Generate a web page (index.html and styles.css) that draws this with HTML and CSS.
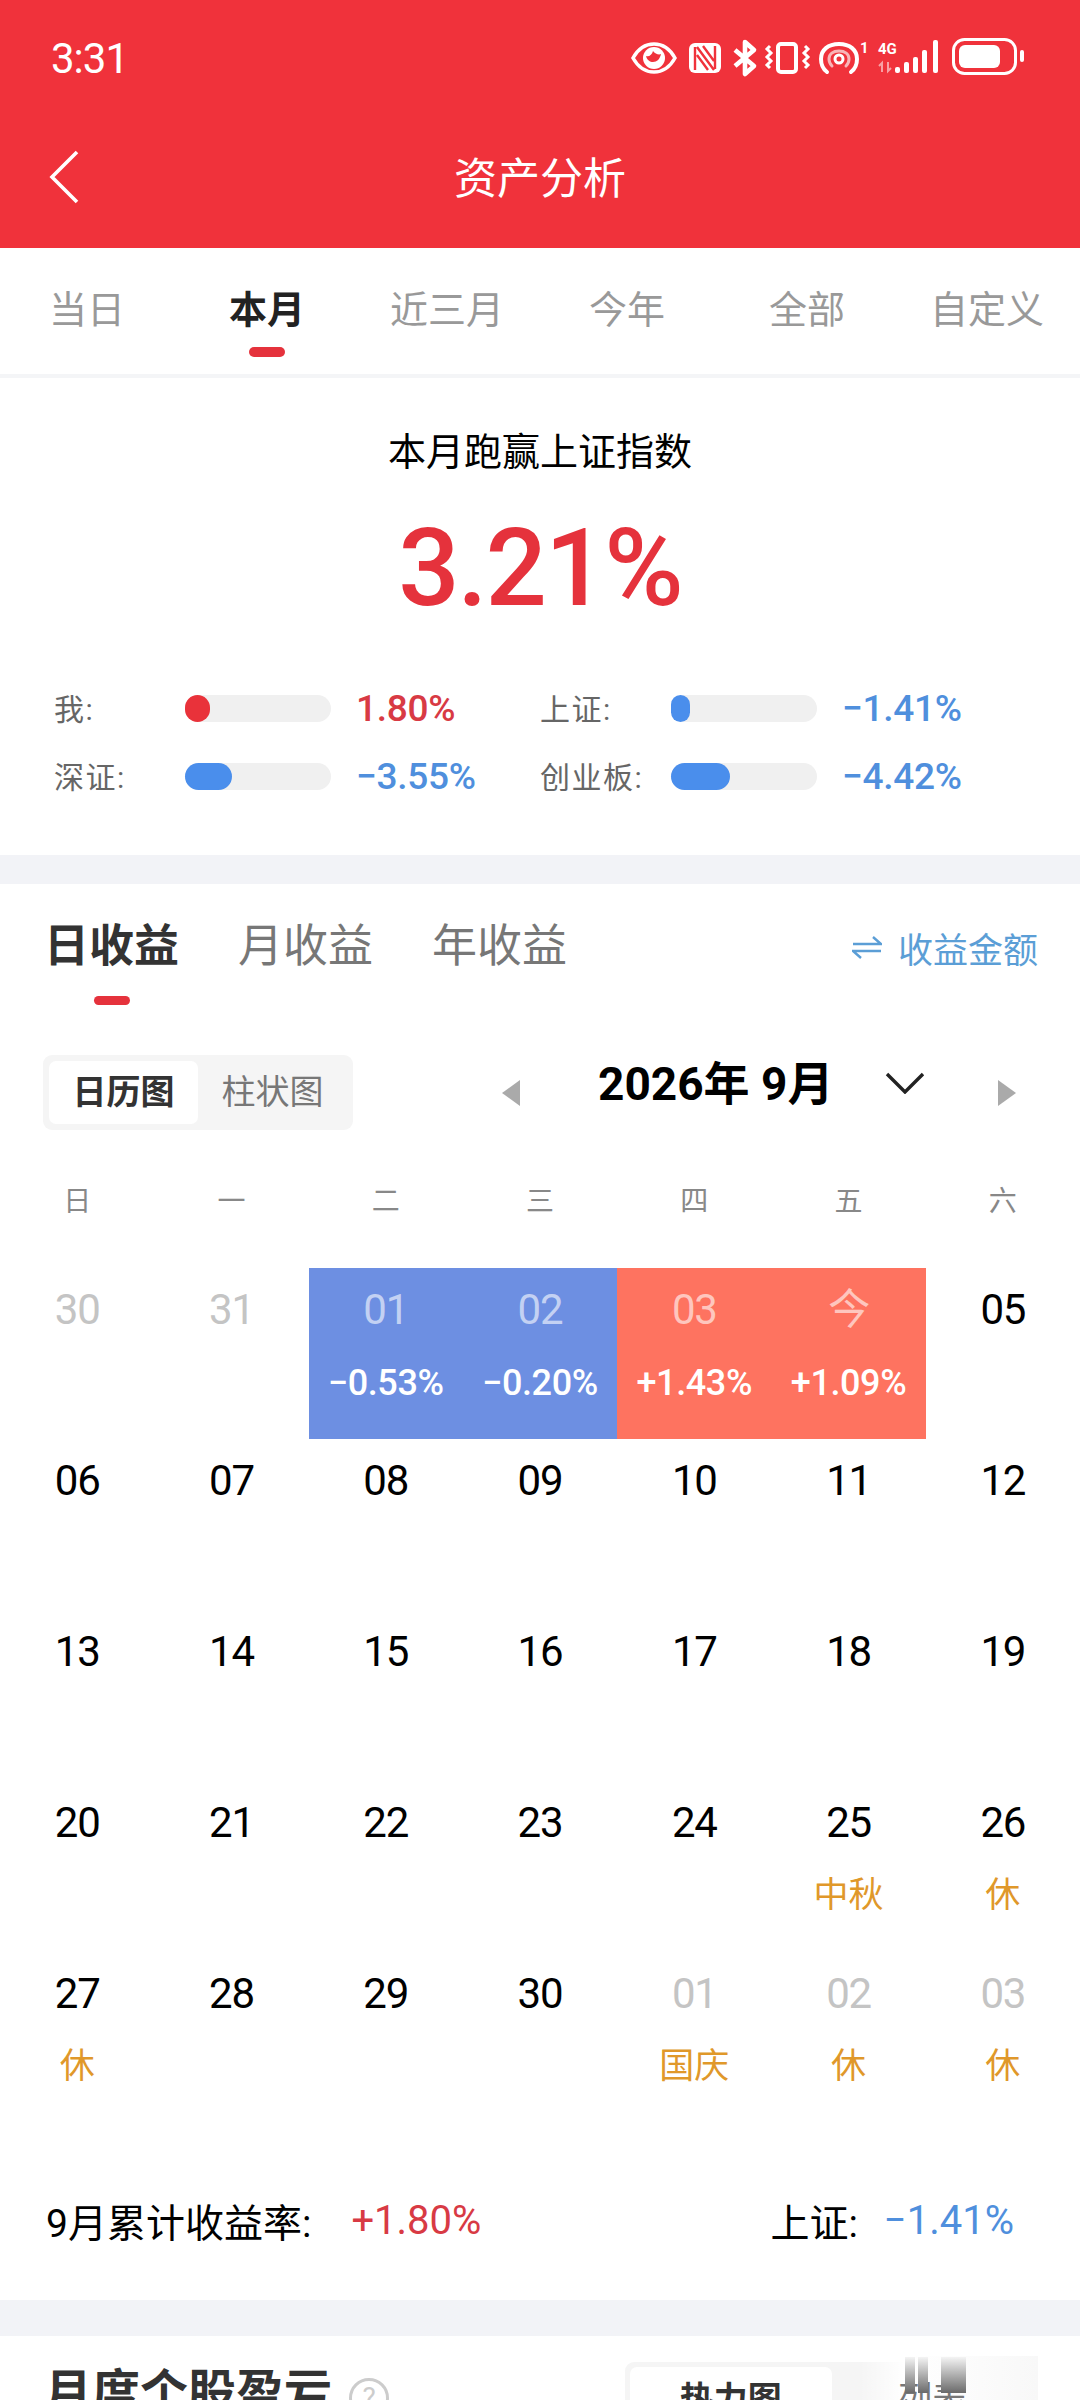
FILE: index.html
```html
<!DOCTYPE html>
<html lang="zh-CN">

<head>
    <meta charset="UTF-8">
    <meta name="viewport" content="width=device-width, initial-scale=1.0">
    <title>资产分析</title>
    <link rel="stylesheet" href="styles.css">
</head>

<body>

    <header class="topbar">
        <div class="status">
            <span class="time">3:31</span>
            <!-- viewBox starts at x=620 so numbers read as screen pixels -->
            <svg class="status-icons" viewBox="620 30 410 50" fill="none" stroke="#fff">
                <!-- eye -->
                <path d="M633 58c5-9 12-14 21-14s16 5 21 14c-5 9-12 14-21 14s-16-5-21-14z" stroke-width="3.5" />
                <circle cx="654" cy="58" r="11" fill="#fff" stroke="none" />
                <path d="M646 56c3 1 6-1 7-5 2 3 6 4 8 3-1 5-4 8-8 8-3 0-6-2-7-6z" fill="#f0323b" stroke="none" />
                <!-- nfc -->
                <rect x="689" y="43" width="32" height="30" rx="6" fill="#fff" stroke="none" />
                <path d="M695 70V47M715 46v23M697 47l17 23M703 46l11 15M697 55l11 15" stroke="#f0323b" stroke-width="2.4" />
                <!-- bluetooth -->
                <path d="M735 50l19 16-9 8V42l9 8-19 16" stroke-width="4.6" stroke-linejoin="round" />
                <!-- vibrate -->
                <rect x="778" y="44" width="18" height="28" rx="3" stroke-width="4" />
                <path d="M770 46l-3 3 4 4-4 4 4 4-4 4 3 3M805 46l3 3-4 4 4 4-4 4 4 4-3 3" stroke-width="3" />
                <!-- hotspot -->
                <path d="M827 72c-4-3-6-8-6-13 0-9 7-15 18-15s18 6 18 15c0 5-2 10-6 13" stroke-width="4" stroke-linecap="round" />
                <path d="M832 66c-2-2-3-4-3-7 0-5 4-8 10-8s10 3 10 8c0 3-1 5-3 7" stroke="#f8b5b8" stroke-width="3" stroke-linecap="round" />
                <circle cx="839" cy="59" r="4" stroke-width="3" />
                <text class="status-text" x="860" y="53">1</text>
                <text class="status-text" x="878" y="54">4G</text>
                <!-- data arrows -->
                <path d="M882 72v-9l-3 3M888 62v9l3-3" stroke="#f8a0a5" stroke-width="2" />
                <!-- signal -->
                <g fill="#fff" stroke="none">
                    <rect x="895" y="67" width="5" height="6" rx="2" />
                    <rect x="904" y="62" width="5" height="11" rx="2" />
                    <rect x="913" y="57" width="5" height="16" rx="2" />
                    <rect x="922" y="50" width="5" height="23" rx="2" />
                    <rect x="933" y="40" width="5" height="33" rx="2" />
                </g>
                <!-- battery -->
                <rect x="953.5" y="39.5" width="62" height="34" rx="11" stroke-width="3" />
                <rect x="959" y="45" width="41" height="23" rx="6" fill="#fff" stroke="none" />
                <rect x="1020" y="50" width="4" height="12" rx="2" fill="#fff" stroke="none" />
            </svg>
        </div>
        <div class="nav">
            <svg class="back" viewBox="0 0 30 54" fill="none" stroke="#fff" stroke-width="3.6">
                <path d="M28 2L3 27l25 25" />
            </svg>
            <h1 class="nav-title">资产分析</h1>
        </div>
    </header>

    <nav class="range-tabs">
        <div class="range-tab">当日</div>
        <div class="range-tab active">本月</div>
        <div class="range-tab">近三月</div>
        <div class="range-tab">今年</div>
        <div class="range-tab">全部</div>
        <div class="range-tab">自定义</div>
    </nav>

    <section class="beat">
        <div class="beat-title">本月跑赢上证指数</div>
        <div class="beat-value">3.21%</div>
        <div class="stats">
            <div class="stat">
                <span class="stat-label">我:</span>
                <span class="bar"><span class="fill up" style="width: 25px"></span></span>
                <span class="stat-value red">1.80%</span>
            </div>
            <div class="stat">
                <span class="stat-label">上证:</span>
                <span class="bar"><span class="fill" style="width: 19px"></span></span>
                <span class="stat-value blue">−1.41%</span>
            </div>
            <div class="stat">
                <span class="stat-label">深证:</span>
                <span class="bar"><span class="fill" style="width: 47px"></span></span>
                <span class="stat-value blue">−3.55%</span>
            </div>
            <div class="stat">
                <span class="stat-label">创业板:</span>
                <span class="bar"><span class="fill" style="width: 59px"></span></span>
                <span class="stat-value blue">−4.42%</span>
            </div>
        </div>
    </section>

    <section class="profit">
        <div class="profit-head">
            <div class="profit-tab active">日收益</div>
            <div class="profit-tab">月收益</div>
            <div class="profit-tab">年收益</div>
            <div class="profit-switch">
                <svg class="swap" viewBox="0 0 30 24" fill="none" stroke="#5b9ed6" stroke-width="2.4">
                    <path d="M1 9h28L21 2M29 16H1l8 7" />
                </svg>
                收益金额
            </div>
        </div>

        <div class="controls">
            <div class="segment">
                <div class="segment-item on">日历图</div>
                <div class="segment-item">柱状图</div>
            </div>
            <span class="arrow left"></span>
            <span class="month">2026年 9月</span>
            <svg class="month-down" viewBox="0 0 40 22" fill="none" stroke="#222" stroke-width="3.4">
                <path d="M2 2l18 18L38 2" />
            </svg>
            <span class="arrow right"></span>
        </div>

        <div class="weekdays">
            <span>日</span><span>一</span><span>二</span><span>三</span><span>四</span><span>五</span><span>六</span>
        </div>

        <div class="calendar">
            <div class="day dim"><b>30</b></div>
            <div class="day dim"><b>31</b></div>
            <div class="day loss"><b>01</b><i>−0.53%</i></div>
            <div class="day loss"><b>02</b><i>−0.20%</i></div>
            <div class="day gain"><b>03</b><i>+1.43%</i></div>
            <div class="day gain"><b>今</b><i>+1.09%</i></div>
            <div class="day"><b>05</b></div>

            <div class="day"><b>06</b></div>
            <div class="day"><b>07</b></div>
            <div class="day"><b>08</b></div>
            <div class="day"><b>09</b></div>
            <div class="day"><b>10</b></div>
            <div class="day"><b>11</b></div>
            <div class="day"><b>12</b></div>

            <div class="day"><b>13</b></div>
            <div class="day"><b>14</b></div>
            <div class="day"><b>15</b></div>
            <div class="day"><b>16</b></div>
            <div class="day"><b>17</b></div>
            <div class="day"><b>18</b></div>
            <div class="day"><b>19</b></div>

            <div class="day"><b>20</b></div>
            <div class="day"><b>21</b></div>
            <div class="day"><b>22</b></div>
            <div class="day"><b>23</b></div>
            <div class="day"><b>24</b></div>
            <div class="day"><b>25</b><i class="holiday">中秋</i></div>
            <div class="day"><b>26</b><i class="holiday">休</i></div>

            <div class="day"><b>27</b><i class="holiday">休</i></div>
            <div class="day"><b>28</b></div>
            <div class="day"><b>29</b></div>
            <div class="day"><b>30</b></div>
            <div class="day dim"><b>01</b><i class="holiday">国庆</i></div>
            <div class="day dim"><b>02</b><i class="holiday">休</i></div>
            <div class="day dim"><b>03</b><i class="holiday">休</i></div>
        </div>

        <div class="total">
            <span class="total-label">9月累计收益率:</span>
            <span class="total-value first red">+1.80%</span>
            <span class="total-label index">上证:</span>
            <span class="total-value blue">−1.41%</span>
        </div>
    </section>

    <section class="stocks">
        <div class="stocks-title">月度个股盈亏</div>
        <span class="help">?</span>
        <div class="segment stocks-segment">
            <div class="segment-item on">热力图</div>
            <div class="segment-item">列表</div>
            <!-- the list tab is caught mid-transition in this shot -->
            <div class="fade"></div>
            <div class="ghost"><span></span><span></span><span></span></div>
        </div>
    </section>

</body>

</html>
```

FILE: styles.css
```css
html,
body {
    height: 2400px;
    overflow: hidden;
}

body {
    margin: 0;
    background-color: #fff;
    color: #000;
    font-family: Roboto, "Noto Sans CJK SC", sans-serif;
}

.red {
    color: #d83a44;
}

.blue {
    color: #4f8fdd;
}

/* Top red bar */
.topbar {
    height: 248px;
    background-color: #f0323b;
    color: #fff;
}

.status {
    display: flex;
    justify-content: space-between;
    align-items: center;
    height: 116px;
    padding-left: 51px;
}

.time {
    font-size: 42px;
    letter-spacing: -1px;
}

.status-icons {
    width: 410px;
    height: 50px;
    margin-right: 50px;
    margin-bottom: 6px;
}

.status-text {
    fill: #fff;
    stroke: none;
    font-size: 15px;
    font-weight: 700;
}

.nav {
    display: flex;
    align-items: center;
    justify-content: center;
    position: relative;
    height: 122px;
}

.back {
    position: absolute;
    left: 49px;
    top: 34px;
    width: 30px;
    height: 54px;
}

.nav-title {
    margin: 0 0 5px;
    font-size: 43px;
    font-weight: 400;
}

/* Range tabs */
.range-tabs {
    display: flex;
    height: 126px;
    margin-left: -3px;
    border-bottom: 4px solid #f4f5f7;
}

.range-tab {
    width: 180px;
    padding-top: 37px;
    color: #999;
    font-size: 38px;
    line-height: 50px;
    text-align: center;
}

.range-tab.active {
    color: #222;
    font-weight: 700;
}

.range-tab.active::after {
    content: "";
    display: block;
    width: 36px;
    height: 10px;
    margin: 12px auto 0;
    border-radius: 5px;
    background-color: #e5323c;
}

/* Beat the index */
.beat {
    box-sizing: border-box;
    height: 506px;
    padding-top: 50px;
    border-bottom: 29px solid #f2f3f7;
}

.beat-title {
    font-size: 38px;
    line-height: 48px;
    text-align: center;
}

.beat-value {
    margin-top: 32px;
    color: #e5323c;
    font-size: 108px;
    font-weight: 500;
    letter-spacing: -2px;
    line-height: 120px;
    text-align: center;
}

.stats {
    display: grid;
    grid-template-columns: 486px 486px;
    row-gap: 28px;
    margin-top: 60px;
    padding-left: 54px;
}

.stat {
    display: flex;
    align-items: center;
    height: 40px;
}

.stat-label {
    width: 131px;
    margin-bottom: 3px;
    color: #666;
    font-size: 30px;
    letter-spacing: 1.5px;
}

.bar {
    display: block;
    width: 146px;
    height: 27px;
    border-radius: 14px;
    background-color: #f0f0f0;
}

.fill {
    display: block;
    height: 27px;
    border-radius: 14px;
    background-color: #4a8eec;
}

.fill.up {
    background-color: #e9323a;
}

.stat-value {
    margin-left: 25px;
    font-size: 37px;
    font-weight: 500;
    letter-spacing: -0.3px;
}

/* Daily profit */
.profit-head {
    display: flex;
    padding: 33px 42px 0 44px;
}

.profit-tab {
    margin-right: 59px;
    color: #777;
    font-size: 45px;
    line-height: 60px;
}

.profit-tab.active {
    color: #333;
    font-weight: 700;
}

.profit-tab.active::after {
    content: "";
    display: block;
    width: 36px;
    height: 9px;
    margin: 19px auto 0;
    border-radius: 5px;
    background-color: #e5323c;
}

.profit-switch {
    display: flex;
    align-items: center;
    gap: 16px;
    height: 60px;
    margin-left: auto;
    color: #5b9ed6;
    font-size: 35px;
}

.swap {
    width: 30px;
    height: 24px;
}

.controls {
    display: flex;
    align-items: center;
    margin-top: 50px;
    padding-left: 43px;
}

.segment {
    display: flex;
    box-sizing: border-box;
    width: 310px;
    height: 75px;
    padding: 6px;
    border-radius: 9px;
    background-color: #f5f5f5;
}

.segment-item {
    width: 149px;
    color: #777;
    font-size: 34px;
    line-height: 63px;
    text-align: center;
}

.segment-item.on {
    border-radius: 7px;
    background-color: #fff;
    color: #333;
    font-weight: 700;
}

.arrow {
    width: 0;
    height: 0;
    border-top: 13px solid transparent;
    border-bottom: 13px solid transparent;
}

.arrow.left {
    margin-left: 149px;
    border-right: 18px solid #aaa;
}

.arrow.right {
    margin-left: 73px;
    border-left: 18px solid #aaa;
}

.month {
    width: 228px;
    margin-left: 78px;
    margin-bottom: 18px;
    font-size: 46px;
    font-weight: 700;
    line-height: 50px;
    white-space: nowrap;
}

.month-down {
    width: 40px;
    height: 22px;
    margin-left: 59px;
    margin-bottom: 20px;
}

.weekdays {
    display: grid;
    grid-template-columns: repeat(7, 1fr);
    margin-top: 51px;
    color: #888;
    font-size: 28px;
    line-height: 42px;
    text-align: center;
}

/* Calendar */
.calendar {
    display: grid;
    grid-template-columns: repeat(7, 1fr);
    grid-auto-rows: 171px;
    margin-top: 45px;
}

.day {
    text-align: center;
}

.day b {
    display: block;
    margin-top: 17px;
    font-size: 42px;
    font-weight: 400;
    letter-spacing: -1.2px;
    line-height: 50px;
}

.day i {
    display: block;
    margin-top: 23px;
    font-size: 36px;
    font-style: normal;
    font-weight: 500;
    letter-spacing: -0.4px;
    line-height: 50px;
}

.day.dim b {
    color: #c4c4c4;
}

.day.loss,
.day.gain {
    color: #fff;
}

.day.loss {
    background-color: #6d8fe2;
}

.day.gain {
    background-color: #fe7360;
}

.day.loss b,
.day.gain b {
    color: rgba(255, 255, 255, 0.6);
}

.day i.holiday {
    color: #e0982a;
    font-size: 35px;
    font-weight: 400;
    letter-spacing: 0;
}

.total {
    display: flex;
    align-items: center;
    height: 50px;
    padding: 72px 66px 55px 46px;
    border-bottom: 36px solid #f2f3f7;
}

.total-label {
    font-size: 39px;
}

.total-label.index {
    margin-left: auto;
}

.total-value {
    margin-left: 26px;
    font-size: 40px;
}

.total-value.first {
    margin-left: 40px;
}

/* Monthly stocks, cut off by the screen edge */
.stocks {
    display: flex;
    align-items: flex-start;
    padding: 26px 42px 0 44px;
}

.stocks-title {
    margin-top: 1px;
    color: #333;
    font-size: 48px;
    font-weight: 700;
    line-height: 60px;
}

.help {
    width: 34px;
    height: 34px;
    margin: 16px 0 0 17px;
    border: 3px solid #ccc;
    border-radius: 50%;
    color: #ccc;
    font-size: 28px;
    line-height: 34px;
    text-align: center;
}

.stocks-segment {
    position: relative;
    width: 413px;
    margin-left: auto;
    padding: 5px;
}

.stocks-segment .segment-item {
    position: relative;
    z-index: 1;
    width: 202px;
    line-height: 64px;
}

.fade {
    position: absolute;
    top: -6px;
    right: 0;
    width: 178px;
    height: 81px;
    background: linear-gradient(to right, rgba(255, 255, 255, 0), #fff 25%, #f8f8f8);
}

.ghost {
    position: absolute;
    z-index: 2;
    top: -5px;
    left: 280px;
    display: flex;
}

.ghost span {
    width: 10px;
    height: 36px;
    margin-right: 3px;
    background: linear-gradient(to bottom, #f4f4f4, #6a6a6a);
}

.ghost span:last-child {
    width: 25px;
    margin-left: 10px;
    margin-right: 0;
}
```
